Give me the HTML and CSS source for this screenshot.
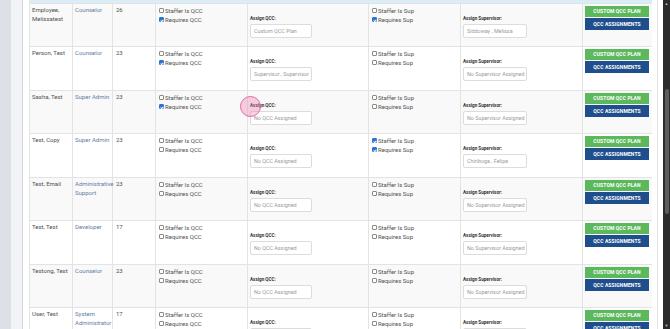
FILE: index.html
```html
<!DOCTYPE html>
<html>
<head>
<link rel="stylesheet" href="styles.css">
</head>
<body>

<div class="page">
  <div class="sidebar">
    <div class="rail"></div>
    <div class="rail-light"></div>
  </div>

  <div class="content">
    <div class="head-strip"></div>
    <table class="users">
      <colgroup>
        <col class="c-name"><col class="c-role"><col class="c-num"><col class="c-check">
        <col class="c-assign"><col class="c-check"><col class="c-assign2"><col class="c-btn">
      </colgroup>
      <tbody>
        <tr>
          <td class="name">Employee, Melissatest</td>
          <td class="role"><a>Counselor</a></td>
          <td class="num">26</td>
          <td class="checks">
            <label><input type="checkbox"> Staffer Is QCC</label>
            <label><input type="checkbox" checked> Requires QCC</label>
          </td>
          <td class="assign">
            <div class="assign-label">Assign QCC:</div>
            <div class="assign-box">Custom QCC Plan</div>
          </td>
          <td class="checks">
            <label><input type="checkbox"> Staffer Is Sup</label>
            <label><input type="checkbox" checked> Requires Sup</label>
          </td>
          <td class="assign">
            <div class="assign-label">Assign Supervisor:</div>
            <div class="assign-box sup">Siddoway , Melissa</div>
          </td>
          <td class="actions">
            <a class="btn btn-green">Custom QCC Plan</a>
            <a class="btn btn-blue">QCC Assignments</a>
          </td>
        </tr>
        <tr>
          <td class="name">Person, Test</td>
          <td class="role"><a>Counselor</a></td>
          <td class="num">23</td>
          <td class="checks">
            <label><input type="checkbox"> Staffer Is QCC</label>
            <label><input type="checkbox" checked> Requires QCC</label>
          </td>
          <td class="assign">
            <div class="assign-label">Assign QCC:</div>
            <div class="assign-box">Supervisor , Supervisor</div>
          </td>
          <td class="checks">
            <label><input type="checkbox"> Staffer Is Sup</label>
            <label><input type="checkbox"> Requires Sup</label>
          </td>
          <td class="assign">
            <div class="assign-label">Assign Supervisor:</div>
            <div class="assign-box sup">No Supervisor Assigned</div>
          </td>
          <td class="actions">
            <a class="btn btn-green">Custom QCC Plan</a>
            <a class="btn btn-blue">QCC Assignments</a>
          </td>
        </tr>
        <tr>
          <td class="name">Sasha, Test</td>
          <td class="role"><a>Super Admin</a></td>
          <td class="num">23</td>
          <td class="checks">
            <label><input type="checkbox"> Staffer Is QCC</label>
            <label><input type="checkbox" checked> Requires QCC</label>
          </td>
          <td class="assign">
            <div class="assign-label">Assign QCC:</div>
            <div class="assign-box">No QCC Assigned</div>
          </td>
          <td class="checks">
            <label><input type="checkbox"> Staffer Is Sup</label>
            <label><input type="checkbox"> Requires Sup</label>
          </td>
          <td class="assign">
            <div class="assign-label">Assign Supervisor:</div>
            <div class="assign-box sup">No Supervisor Assigned</div>
          </td>
          <td class="actions">
            <a class="btn btn-green">Custom QCC Plan</a>
            <a class="btn btn-blue">QCC Assignments</a>
          </td>
        </tr>
        <tr>
          <td class="name">Test, Copy</td>
          <td class="role"><a>Super Admin</a></td>
          <td class="num">23</td>
          <td class="checks">
            <label><input type="checkbox"> Staffer Is QCC</label>
            <label><input type="checkbox"> Requires QCC</label>
          </td>
          <td class="assign">
            <div class="assign-label">Assign QCC:</div>
            <div class="assign-box">No QCC Assigned</div>
          </td>
          <td class="checks">
            <label><input type="checkbox" checked> Staffer Is Sup</label>
            <label><input type="checkbox" checked> Requires Sup</label>
          </td>
          <td class="assign">
            <div class="assign-label">Assign Supervisor:</div>
            <div class="assign-box sup">Chiriboga , Felipe</div>
          </td>
          <td class="actions">
            <a class="btn btn-green">Custom QCC Plan</a>
            <a class="btn btn-blue">QCC Assignments</a>
          </td>
        </tr>
        <tr>
          <td class="name">Test, Email</td>
          <td class="role"><a>Administrative Support</a></td>
          <td class="num">23</td>
          <td class="checks">
            <label><input type="checkbox"> Staffer Is QCC</label>
            <label><input type="checkbox"> Requires QCC</label>
          </td>
          <td class="assign">
            <div class="assign-label">Assign QCC:</div>
            <div class="assign-box">No QCC Assigned</div>
          </td>
          <td class="checks">
            <label><input type="checkbox"> Staffer Is Sup</label>
            <label><input type="checkbox"> Requires Sup</label>
          </td>
          <td class="assign">
            <div class="assign-label">Assign Supervisor:</div>
            <div class="assign-box sup">No Supervisor Assigned</div>
          </td>
          <td class="actions">
            <a class="btn btn-green">Custom QCC Plan</a>
            <a class="btn btn-blue">QCC Assignments</a>
          </td>
        </tr>
        <tr>
          <td class="name">Test, Test</td>
          <td class="role"><a>Developer</a></td>
          <td class="num">17</td>
          <td class="checks">
            <label><input type="checkbox"> Staffer Is QCC</label>
            <label><input type="checkbox"> Requires QCC</label>
          </td>
          <td class="assign">
            <div class="assign-label">Assign QCC:</div>
            <div class="assign-box">No QCC Assigned</div>
          </td>
          <td class="checks">
            <label><input type="checkbox"> Staffer Is Sup</label>
            <label><input type="checkbox"> Requires Sup</label>
          </td>
          <td class="assign">
            <div class="assign-label">Assign Supervisor:</div>
            <div class="assign-box sup">No Supervisor Assigned</div>
          </td>
          <td class="actions">
            <a class="btn btn-green">Custom QCC Plan</a>
            <a class="btn btn-blue">QCC Assignments</a>
          </td>
        </tr>
        <tr>
          <td class="name">Testong, Test</td>
          <td class="role"><a>Counselor</a></td>
          <td class="num">23</td>
          <td class="checks">
            <label><input type="checkbox"> Staffer Is QCC</label>
            <label><input type="checkbox"> Requires QCC</label>
          </td>
          <td class="assign">
            <div class="assign-label">Assign QCC:</div>
            <div class="assign-box">No QCC Assigned</div>
          </td>
          <td class="checks">
            <label><input type="checkbox"> Staffer Is Sup</label>
            <label><input type="checkbox"> Requires Sup</label>
          </td>
          <td class="assign">
            <div class="assign-label">Assign Supervisor:</div>
            <div class="assign-box sup">No Supervisor Assigned</div>
          </td>
          <td class="actions">
            <a class="btn btn-green">Custom QCC Plan</a>
            <a class="btn btn-blue">QCC Assignments</a>
          </td>
        </tr>
        <tr>
          <td class="name">User, Test</td>
          <td class="role"><a>System Administrator</a></td>
          <td class="num">17</td>
          <td class="checks">
            <label><input type="checkbox"> Staffer Is QCC</label>
            <label><input type="checkbox"> Requires QCC</label>
          </td>
          <td class="assign">
            <div class="assign-label">Assign QCC:</div>
            <div class="assign-box">No QCC Assigned</div>
          </td>
          <td class="checks">
            <label><input type="checkbox"> Staffer Is Sup</label>
            <label><input type="checkbox"> Requires Sup</label>
          </td>
          <td class="assign">
            <div class="assign-label">Assign Supervisor:</div>
            <div class="assign-box sup">No Supervisor Assigned</div>
          </td>
          <td class="actions">
            <a class="btn btn-green">Custom QCC Plan</a>
            <a class="btn btn-blue">QCC Assignments</a>
          </td>
        </tr>
      </tbody>
    </table>
  </div>

  <div class="gutter"></div>

  <div class="scrollbar">
    <span class="arrow">&#9650;</span>
    <div class="track"><div class="thumb"></div></div>
    <span class="arrow">&#9660;</span>
  </div>
</div>

<span class="click-ring"></span>

</body>
</html>
```

FILE: styles.css
```css
html, body {
	margin: 0;
	height: 329px;
	overflow: hidden;
	background-color: #ffffff;
	font-family: Roboto, "Liberation Sans", Arial, sans-serif;
	color: #505050;
}

.page {
	display: flex;
	height: 329px;
}

.sidebar {
	display: flex;
	width: 22px;
	border-right: 1px solid #d3d7dc;
}

.rail {
	width: 11px;
	background-color: #dde1e7;
}

.rail-light {
	flex: 1;
	background-color: #f1f3f6;
}

.content {
	width: 623px;
	padding-left: 6px;
}

.head-strip {
	height: 3px;
	background-color: #d9edf7;
}

.users {
	width: 623px;
	table-layout: fixed;
	border-collapse: collapse;
	font-size: 6px;
	line-height: 8.5px;
}

.c-name { width: 43px; }
.c-role { width: 40px; }
.c-num { width: 43px; }
.c-check { width: 92px; }
.c-assign { width: 121px; }
.c-assign2 { width: 122px; }
.c-btn { width: 70px; }

.users td {
	border: 1px solid #e3e3e3;
	vertical-align: top;
	padding: 2px 2px 0 2px;
}

.users tr {
	height: 44px;
}

.users tr:nth-child(odd) {
	height: 43px;
	background-color: #f9f9f9;
}

.users td.num {
	padding-left: 3px;
}

.users td.role {
	padding-right: 0;
}

.role a {
	color: #5f7ea6;
}

.checks {
	padding-left: 3px !important;
	line-height: 9px;
}

.checks label {
	display: flex;
	align-items: center;
	height: 9px;
	white-space: nowrap;
}

.checks input {
	appearance: none;
	-webkit-appearance: none;
	width: 4.5px;
	height: 4.5px;
	margin: 0 1.5px 0 0;
	border: 0.6px solid #8a8a8a;
	border-radius: 1px;
	background-color: #ffffff;
	box-sizing: border-box;
	position: relative;
}

.checks input:checked {
	background-color: #2a74d6;
	border-color: #2a74d6;
}

.checks input:checked::after {
	content: "";
	position: absolute;
	left: 1.2px;
	top: 0.3px;
	width: 1px;
	height: 2px;
	border: solid #ffffff;
	border-width: 0 0.6px 0.6px 0;
	transform: rotate(45deg);
}

.users td.assign {
	padding-top: 12px;
}

.assign-label {
	font-size: 4.6px;
	line-height: 6px;
	font-weight: bold;
	color: #333333;
}

.assign-box {
	margin-top: 2px;
	width: 62px;
	height: 14px;
	box-sizing: border-box;
	border: 1px solid #dcdcdc;
	border-radius: 2px;
	background-color: #ffffff;
	padding-left: 3px;
	font-size: 5.4px;
	line-height: 12px;
	color: #9a9a9a;
	white-space: nowrap;
	overflow: hidden;
}

.assign-box.sup {
	width: 64px;
}

.users td.actions {
	padding: 2px 3px 0 2px;
}

.btn {
	display: block;
	height: 11px;
	line-height: 11px;
	text-align: center;
	text-transform: uppercase;
	font-size: 5px;
	font-weight: bold;
	color: #ffffff;
	letter-spacing: 0.1px;
}

.btn-green {
	background-color: #5cb85c;
}

.btn-blue {
	margin-top: 1px;
	height: 12px;
	line-height: 12px;
	background-color: #1f4e8c;
}

.gutter {
	width: 5px;
	border-right: 1px solid #e6e6e6;
	background-color: #ffffff;
}

.gutter + .scrollbar {
	margin-left: 5px;
}

.scrollbar {
	display: flex;
	flex-direction: column;
	align-items: center;
	width: 7px;
	background-color: #2c2c2c;
}

.arrow {
	font-size: 4px;
	line-height: 7px;
	color: #bdbdbd;
}

.track {
	flex: 1;
	width: 100%;
	padding-top: 82px;
}

.thumb {
	margin: 0 auto;
	width: 4px;
	height: 125px;
	border-radius: 2px;
	background-color: #5e5e5e;
}

.click-ring {
	position: absolute;
	left: 240px;
	top: 96px;
	width: 19px;
	height: 19px;
	border-radius: 50%;
	border: 1px solid #e26a9f;
	background-color: rgba(236, 120, 170, 0.35);
}
```
